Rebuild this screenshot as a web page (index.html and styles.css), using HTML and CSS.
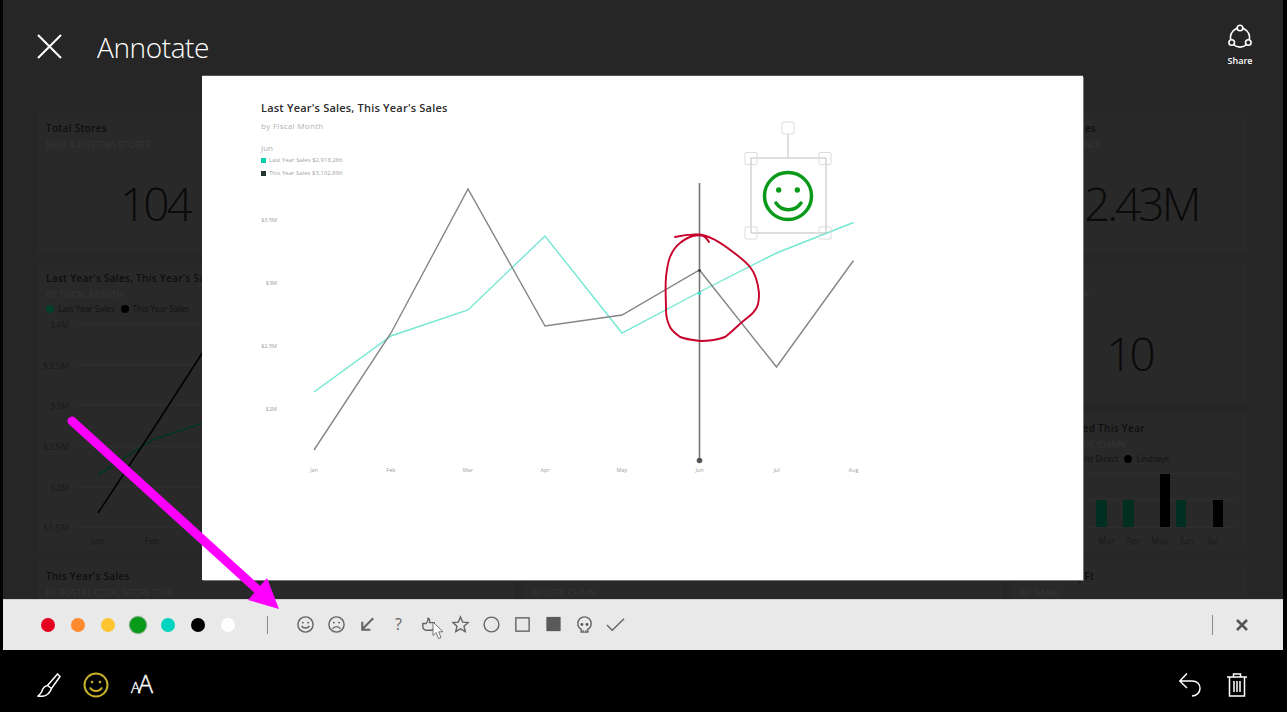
FILE: index.html
```html
<!DOCTYPE html>
<html lang="en">
<head>
    <meta charset="UTF-8">
    <title>Annotate</title>
    <link rel="stylesheet" href="styles.css">
</head>
<body>
<div class="page">
    <div class="backdrop">
        <header class="top-bar">
            <svg class="close-icon" viewBox="0 0 25 25"><path d="M1 1 24 24M24 1 1 24"/></svg>
            <h1>Annotate</h1>
            <div class="share">
                <svg viewBox="0 0 24 24">
                    <circle class="ring" cx="12" cy="13.5" r="9.6"/>
                    <circle class="node" cx="12" cy="4" r="2.8"/>
                    <circle class="node" cx="3.7" cy="18.5" r="2.8"/>
                    <circle class="node" cx="20.3" cy="18.5" r="2.8"/>
                </svg>
                <span>Share</span>
            </div>
        </header>

        <!-- dimmed dashboard behind the report -->
        <div class="dashboard">
            <section class="tile">
                <div class="tile-title">Total Stores</div>
                <div class="tile-sub">NEW &amp; EXISTING STORES</div>
                <div class="tile-num">104</div>
            </section>
            <section class="tile"></section>
            <section class="tile"></section>
            <section class="tile">
                <div class="tile-title">This Year Sales</div>
                <div class="tile-sub">NEW STORES ONLY</div>
                <div class="tile-num">$2.43M</div>
            </section>

            <section class="tile tile-wide tile-tall">
                <div class="tile-title">Last Year's Sales, This Year's Sales</div>
                <div class="tile-sub">BY FISCAL MONTH</div>
                <div class="tile-legend">
                    <i class="dot dot-green"></i><span>Last Year Sales</span>
                    <i class="dot dot-black"></i><span>This Year Sales</span>
                </div>
                <svg class="tile-chart" viewBox="38 322 474 229">
                    <path class="grid-line" d="M78 324H512M78 365H512M78 405H512M78 446H512M78 487H512M78 527H512"/>
                    <g class="axis-text">
                        <text x="69" y="328" text-anchor="end">$4M</text>
                        <text x="69" y="369" text-anchor="end">$3.5M</text>
                        <text x="69" y="409" text-anchor="end">$3M</text>
                        <text x="69" y="450" text-anchor="end">$2.5M</text>
                        <text x="69" y="491" text-anchor="end">$2M</text>
                        <text x="69" y="531" text-anchor="end">$1.5M</text>
                        <text x="98" y="544" text-anchor="middle">Jan</text>
                        <text x="152" y="544" text-anchor="middle">Feb</text>
                    </g>
                    <path class="line-green" d="M98 475 152 440 210 421"/>
                    <path class="line-black" d="M98 513 152 431 210 341"/>
                </svg>
            </section>
            <section class="tile tile-tall"></section>
            <section class="tile">
                <div class="tile-title"></div>
                <div class="tile-sub">THIS YEAR ONLY</div>
                <div class="tile-num">10</div>
            </section>
            <section class="tile">
                <div class="tile-title">Stores Opened This Year</div>
                <div class="tile-sub">BY OPEN MONTH, CHAIN</div>
                <div class="tile-legend">
                    <span>Chain</span>
                    <i class="dot dot-green"></i><span>Fashions Direct</span>
                    <i class="dot dot-black"></i><span>Lindseys</span>
                </div>
                <svg class="tile-chart tile-chart-bars" viewBox="1012 470 235 81">
                    <path class="grid-line" d="M1012 474H1234M1012 500H1234M1012 527H1234"/>
                    <rect class="bar-green" x="1096" y="500" width="11" height="27"/>
                    <rect class="bar-green" x="1123" y="500" width="11" height="27"/>
                    <rect class="bar-black" x="1160" y="474" width="10" height="53"/>
                    <rect class="bar-green" x="1176" y="500" width="10" height="27"/>
                    <rect class="bar-black" x="1213" y="500" width="10" height="27"/>
                    <g class="axis-text">
                        <text x="1107" y="544" text-anchor="middle">Mar</text>
                        <text x="1133" y="544" text-anchor="middle">Apr</text>
                        <text x="1160" y="544" text-anchor="middle">May</text>
                        <text x="1187" y="544" text-anchor="middle">Jun</text>
                        <text x="1213" y="544" text-anchor="middle">Jul</text>
                    </g>
                </svg>
            </section>

            <section class="tile tile-wide">
                <div class="tile-title">This Year's Sales</div>
                <div class="tile-sub">BY POSTAL CODE, STORE TYPE</div>
            </section>
            <section class="tile">
                <div class="tile-title"></div>
                <div class="tile-sub">BY CITY, CHAIN</div>
            </section>
            <section class="tile">
                <div class="tile-title">Sales Per Sq Ft</div>
                <div class="tile-sub">BY NAME</div>
            </section>
        </div>

        <!-- report being annotated -->
        <div class="report">
            <div class="report-head">
                <h2>Last Year's Sales, This Year's Sales</h2>
                <div class="report-sub">by Fiscal Month</div>
                <div class="report-month">Jun</div>
                <div class="report-legend"><i class="key key-teal"></i>Last Year Sales $2,918,286</div>
                <div class="report-legend"><i class="key key-dark"></i>This Year Sales $3,102,896</div>
            </div>
            <svg class="report-chart" viewBox="202 76 881 504">
                <g class="report-axis">
                    <text x="277" y="222" text-anchor="end">$3.5M</text>
                    <text x="277" y="285" text-anchor="end">$3M</text>
                    <text x="277" y="348" text-anchor="end">$2.5M</text>
                    <text x="277" y="411" text-anchor="end">$2M</text>
                    <text x="314" y="471.5" text-anchor="middle">Jan</text>
                    <text x="391" y="471.5" text-anchor="middle">Feb</text>
                    <text x="468" y="471.5" text-anchor="middle">Mar</text>
                    <text x="545" y="471.5" text-anchor="middle">Apr</text>
                    <text x="622" y="471.5" text-anchor="middle">May</text>
                    <text x="699.5" y="471.5" text-anchor="middle">Jun</text>
                    <text x="776.5" y="471.5" text-anchor="middle">Jul</text>
                    <text x="853.5" y="471.5" text-anchor="middle">Aug</text>
                </g>
                <path class="series-teal" d="M314 392 391 336 468 310 545 236 622 333 699.5 292 776.5 253 853.5 222.500"/>
                <path class="series-dark" d="M314 450 391 333 468 189 545 326 622 315 699.5 270 776.5 367 853.5 260.500"/>
                <path class="cursor-line" d="M699.5 183V460"/>
                <circle class="cursor-dot" cx="699.5" cy="460.5" r="2.8"/>
                <circle class="point-teal" cx="699.5" cy="293.500" r="1.6"/>
                <circle class="point-dark" cx="699.5" cy="270.500" r="1.6"/>

                <path class="scribble" d="M675 237C683 235 692 234 700 234.500C712 236 724 245 733 252C741 258 746 262 750 267C755 273 758 283 759 293C759 300 758 305 757 307C754 313 751 315 747 318C739 324 732 332 725 337C717 340 708 341 700 341C692 340 685 339 680 337C675 333 672 331 670 327C667 321 666 316 666 310C666 298 665 288 666 277C667 268 668 262 670 257C673 250 676 246 680 243C685 239 689 237 693 236C698 235 702 235 705 237C707 239 708 240 709 242"/>

                <g class="select-box">
                    <path d="M751 158H826V233H751ZM788 134V158"/>
                    <rect x="782" y="122" width="12" height="12" rx="1"/>
                    <rect x="745" y="152.500" width="12" height="12" rx="1"/>
                    <rect x="819" y="152.500" width="12" height="12" rx="1"/>
                    <rect x="745" y="227" width="12" height="12" rx="1"/>
                    <rect x="819" y="227" width="12" height="12" rx="1"/>
                </g>
                <g class="stamp">
                    <circle cx="788" cy="196" r="23.500"/>
                    <path d="M776 203C782 212 795 212 801 203"/>
                    <circle class="stamp-eye" cx="778.700" cy="190" r="2.700"/>
                    <circle class="stamp-eye" cx="797.300" cy="190" r="2.700"/>
                </g>
            </svg>
        </div>
    </div>

    <div class="toolbar">
        <div class="swatch-slot"><i class="swatch swatch-red"></i></div>
        <div class="swatch-slot"><i class="swatch swatch-orange"></i></div>
        <div class="swatch-slot"><i class="swatch swatch-yellow"></i></div>
        <div class="swatch-slot"><i class="swatch swatch-green"></i></div>
        <div class="swatch-slot"><i class="swatch swatch-teal"></i></div>
        <div class="swatch-slot"><i class="swatch swatch-black"></i></div>
        <div class="swatch-slot"><i class="swatch swatch-white"></i></div>
        <div class="divider divider-left"></div>

        <div class="stamps">
            <svg viewBox="0 0 20 20"><circle cx="10" cy="10" r="8"/><path d="M5.800 11.500C7.500 14.500 12.500 14.500 14.200 11.500"/><circle class="solid" cx="7.200" cy="8" r="1"/><circle class="solid" cx="12.800" cy="8" r="1"/></svg>
            <svg viewBox="0 0 20 20"><circle cx="10" cy="10" r="8"/><path d="M6 14.500C7.500 11.500 12.500 11.500 14 14.500"/><circle class="solid" cx="7.200" cy="8" r="1"/><circle class="solid" cx="12.800" cy="8" r="1"/></svg>
            <svg class="heavy" viewBox="0 0 20 20"><path d="M16 3.500 4.500 15M4.500 7V15.500H13"/></svg>
            <span class="stamp-glyph">?</span>
            <svg viewBox="0 0 20 20"><path d="M3 9H6.500C8 7.500 8.500 5.500 8.500 3.500C9.800 3.500 10.500 5 10 8H15V13C15 15 13.500 16 12 16H6.500C4.500 16 3 14 3 12.500Z"/></svg>
            <svg viewBox="0 0 20 20"><path d="M10 2 12.300 7.500 18 8 13.700 11.900 15 17.500 10 14.500 5 17.500 6.300 11.900 2 8 7.700 7.500Z"/></svg>
            <svg viewBox="0 0 20 20"><circle cx="10" cy="10" r="7.800"/></svg>
            <svg viewBox="0 0 20 20"><rect x="3" y="3" width="14" height="14"/></svg>
            <svg viewBox="0 0 20 20"><rect class="solid" x="2.500" y="2" width="15" height="15"/></svg>
            <svg viewBox="0 0 20 20"><path d="M6.500 18V15C4.500 14 3 12 3 9C3 5 6 2 10 2S17 5 17 9C17 12 15.500 14 13.500 15V18ZM8.500 18V16M11.500 18V16"/><circle class="solid" cx="7.300" cy="10" r="1.500"/><circle class="solid" cx="12.700" cy="10" r="1.500"/></svg>
            <svg viewBox="0 0 20 20"><path d="M1 10.500 6.500 16 19 4"/></svg>
        </div>

        <div class="divider divider-right"></div>
        <svg class="toolbar-close" viewBox="0 0 12 12"><path d="M1 1 11 11M11 1 1 11"/></svg>
    </div>

    <div class="bottom-bar">
        <div class="bottom-group">
            <svg class="tool tool-brush" viewBox="0 0 24 24"><path d="M20.500 1 23 3.500 14.500 15.500 10.500 12.500ZM10.500 12.500C6.500 13 5.500 16 4.500 19C3.500 21 2 22 1 23C6 24 12 22.500 14.500 15.500"/></svg>
            <svg class="tool tool-smile" viewBox="0 0 26 26"><circle cx="13" cy="13" r="11.500"/><path d="M7 15.500C9.500 20 16.500 20 19 15.500"/><circle class="eye" cx="9" cy="10" r="1.300"/><circle class="eye" cx="17" cy="10" r="1.300"/></svg>
            <div class="tool-text"><span class="small-a">A</span><span class="big-a">A</span></div>
        </div>
        <div class="bottom-group bottom-right">
            <svg class="tool tool-undo" viewBox="0 0 22 24"><path d="M8 .5 .8 8 8 15M1 8H13C18 8 21 11 21 15.500C21 20 17 23 13 23"/></svg>
            <svg class="tool tool-trash" viewBox="0 0 20 24"><path d="M0 4H20M6.500 4V1H13.500V4M2.500 4V23H17.500V4M7 8V19M10 8V19M13 8V19"/></svg>
        </div>
    </div>

    <!-- markup drawn on top of the screenshot -->
    <svg class="mouse" viewBox="0 0 12 19"><path d="M1 1V14.500L4.200 11.500 6.500 17.500 9 16.500 6.700 10.800H11Z"/></svg>
    <svg class="callout" viewBox="0 0 1287 712">
        <path class="callout-line" d="M72 421 258 590"/>
        <path class="callout-head" d="M267 578 248 600 279 609Z"/>
    </svg>
</div>
</body>
</html>
```

FILE: styles.css
```css
* {
    box-sizing: border-box;
}
body {
    margin: 0;
    background-color: #000;
    font-family: "Open Sans", Arial, sans-serif;
}
.page {
    position: relative;
    width: 1287px;
    height: 712px;
    overflow: hidden;
    background-color: #000;
}
.backdrop {
    position: relative;
    height: 599px;
    margin: 0 4px 0 3px;
    background-color: #262626;
    overflow: hidden;
}

/* header */
.top-bar {
    display: flex;
    align-items: flex-start;
    height: 113px;
    padding: 0 23px 0 34px;
    color: #fff;
}
.close-icon {
    width: 25px;
    height: 25px;
    margin-top: 34px;
    fill: none;
    stroke: #fff;
    stroke-width: 2;
}
.top-bar h1 {
    margin: 27px 0 0 35px;
    font-size: 28px;
    font-weight: 300;
    line-height: 40px;
    letter-spacing: -0.4px;
}
.share {
    display: flex;
    flex-direction: column;
    align-items: center;
    width: 40px;
    margin: 24px 0 0 auto;
}
.share svg {
    width: 24px;
    height: 24px;
    overflow: visible;
}
.share .ring {
    fill: none;
    stroke: #fff;
    stroke-width: 1.6;
}
.share .node {
    fill: #262626;
    stroke: #fff;
    stroke-width: 1.6;
}
.share span {
    margin-top: 7px;
    font-size: 9px;
    font-weight: 600;
    line-height: 12px;
}

/* dashboard tiles */
.dashboard {
    display: grid;
    grid-template-columns: 234px 232px 478px 235px;
    grid-template-rows: 140px 140px 138px 140px;
    gap: 10px;
    margin-left: 35px;
}
.tile {
    position: relative;
    padding: 8px;
    background-color: #292929;
}
.tile-wide {
    grid-column: span 2;
}
.tile-tall {
    grid-row: span 2;
}
.tile-title {
    min-height: 14px;
    font-size: 10px;
    font-weight: 600;
    line-height: 14px;
    letter-spacing: 0.3px;
    color: #0e0e0e;
    white-space: nowrap;
}
.tile-sub {
    margin-top: 3px;
    font-size: 9px;
    line-height: 14px;
    color: #363636;
    white-space: nowrap;
}
.tile-num {
    margin-top: 20px;
    text-align: center;
    font-size: 46px;
    font-weight: 300;
    line-height: 62px;
    letter-spacing: -3px;
    color: #0a0a0a;
}
.tile-legend {
    display: flex;
    align-items: center;
    font-size: 8.200px;
    line-height: 14px;
    color: #111;
    white-space: nowrap;
}
.dot {
    width: 8px;
    height: 8px;
    margin-right: 4px;
    border-radius: 50%;
}
.tile-legend span {
    margin-right: 6px;
}
.dot-green {
    background-color: #00402d;
}
.dot-black {
    background-color: #000;
}
.tile-chart {
    position: absolute;
    left: 0;
    bottom: 0;
    width: 474px;
    height: 229px;
    overflow: visible;
}
.tile-chart-bars {
    width: 235px;
    height: 81px;
}
.grid-line {
    fill: none;
    stroke: #303030;
    stroke-width: 1;
}
.axis-text {
    font-size: 9px;
    fill: #1a1a1a;
}
.line-green {
    fill: none;
    stroke: #00351f;
    stroke-width: 1.500;
}
.line-black {
    fill: none;
    stroke: #000;
    stroke-width: 1.500;
}
.bar-green {
    fill: #002f21;
}
.bar-black {
    fill: #000;
}

/* report card */
.report {
    position: absolute;
    left: 199px;
    top: 76px;
    width: 881px;
    height: 504px;
    background-color: #fff;
    box-shadow: 1px 1px 0 #777, 0 -1px 0 #555;
}
.report-head {
    padding: 24px 0 0 59px;
}
.report-head h2 {
    margin: 0;
    font-size: 11px;
    font-weight: 600;
    line-height: 16px;
    letter-spacing: 0.2px;
    color: #2b2b2b;
}
.report-sub {
    margin-top: 4px;
    font-size: 8px;
    line-height: 12px;
    letter-spacing: 0.3px;
    color: #b0b0b0;
}
.report-month {
    margin-top: 10px;
    font-size: 8px;
    line-height: 12px;
    color: #b0b0b0;
}
.report-legend {
    display: flex;
    align-items: center;
    height: 10px;
    margin-top: 3px;
    font-size: 5.800px;
    letter-spacing: 0.1px;
    color: #a0a0a0;
}
.report-month + .report-legend {
    margin-top: 1px;
}
.key {
    width: 5px;
    height: 5px;
    margin-right: 3px;
}
.key-teal {
    background-color: #00d0ac;
}
.key-dark {
    background-color: #22332e;
}
.report-chart {
    position: absolute;
    left: 0;
    top: 0;
    width: 881px;
    height: 504px;
}
.report-axis {
    font-size: 5.500px;
    fill: #a0a0a0;
}
.series-teal {
    fill: none;
    stroke: #72e8d2;
    stroke-width: 1.400;
}
.series-dark {
    fill: none;
    stroke: #858585;
    stroke-width: 1.400;
}
.cursor-line {
    fill: none;
    stroke: #777;
    stroke-width: 1.600;
}
.cursor-dot {
    fill: #555;
}
.point-teal {
    fill: #2fe0c0;
}
.point-dark {
    fill: #444;
}
.scribble {
    fill: none;
    stroke: #c8002c;
    stroke-width: 1.900;
    stroke-linecap: round;
}
.select-box path {
    fill: none;
    stroke: #bdbdbd;
    stroke-width: 1;
}
.select-box rect {
    fill: none;
    stroke: #dcdcdc;
    stroke-width: 1;
}
.stamp circle, .stamp path {
    fill: none;
    stroke: #0a9a1a;
    stroke-width: 3.500;
    stroke-linecap: round;
}
.stamp .stamp-eye {
    fill: #0a9a1a;
    stroke: none;
}

/* colour and stamp toolbar */
.toolbar {
    display: flex;
    align-items: center;
    height: 51px;
    margin: 0 4px 0 3px;
    padding: 0 0 1px 30px;
    background-color: #e9e9e9;
    border-top: 1px solid #d0d0d0;
}
.swatch-slot {
    display: flex;
    justify-content: center;
    width: 30px;
}
.swatch {
    width: 14px;
    height: 14px;
    border-radius: 50%;
}
.swatch-red {
    background-color: #e4001e;
}
.swatch-orange {
    background-color: #ff8a2d;
}
.swatch-yellow {
    background-color: #ffc530;
}
.swatch-green {
    width: 16px;
    height: 16px;
    background-color: #0a9a1a;
    box-shadow: 0 0 1px 1px #5e9e63;
}
.swatch-teal {
    background-color: #00d2c0;
}
.swatch-black {
    background-color: #000;
}
.swatch-white {
    background-color: #fff;
}
.divider {
    width: 1px;
    background-color: #8c8c8c;
}
.divider-left {
    height: 18px;
    margin-left: 23.500px;
}
.divider-right {
    height: 20px;
    margin-left: auto;
}
.stamps {
    display: flex;
    align-items: center;
    margin-left: 22.500px;
}
.stamps svg, .stamp-glyph {
    width: 19px;
    height: 19px;
    margin: 0 6px;
    fill: none;
    stroke: #666;
    stroke-width: 1.500;
}
.stamps .solid {
    fill: #5a5a5a;
    stroke: none;
}
.stamps .heavy {
    stroke-width: 2.200;
}
.stamp-glyph {
    font-size: 16px;
    line-height: 19px;
    text-align: center;
    color: #666;
}
.toolbar-close {
    width: 12px;
    height: 12px;
    margin: 0 35px 0 23px;
    fill: none;
    stroke: #555;
    stroke-width: 2.500;
}

/* bottom tool row */
.bottom-bar {
    display: flex;
    justify-content: space-between;
    height: 62px;
    padding: 7px 40px 0 37px;
}
.bottom-group {
    display: flex;
    align-items: center;
    gap: 22px;
}
.bottom-right {
    gap: 26px;
}
.tool {
    fill: none;
    stroke: #fff;
    stroke-width: 1.500;
}
.tool-brush {
    width: 24px;
    height: 24px;
}
.tool-smile {
    width: 26px;
    height: 26px;
    stroke: #c8b22a;
    stroke-width: 2;
}
.tool-smile .eye {
    fill: #c8b22a;
    stroke: none;
}
.tool-undo {
    width: 22px;
    height: 24px;
}
.tool-trash {
    width: 20px;
    height: 24px;
}
.tool-text {
    display: flex;
    align-items: baseline;
    color: #fff;
    font-weight: 300;
    line-height: 26px;
    -webkit-text-stroke: 0.4px #fff;
}
.small-a {
    font-size: 15px;
}
.big-a {
    font-size: 25px;
    margin-left: -2px;
}

/* overlays */
.mouse {
    position: absolute;
    left: 432px;
    top: 621px;
    width: 12px;
    height: 19px;
    fill: #fff;
    stroke: #555;
    stroke-width: 0.800;
}
.callout {
    position: absolute;
    left: 0;
    top: 0;
    width: 1287px;
    height: 712px;
    pointer-events: none;
}
.callout-line {
    fill: none;
    stroke: #ff00ff;
    stroke-width: 9;
    stroke-linecap: round;
}
.callout-head {
    fill: #ff00ff;
}
```
